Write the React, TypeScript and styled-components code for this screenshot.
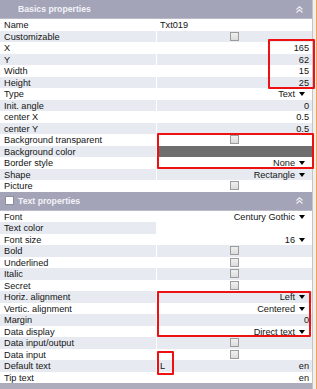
import React from "react";
import styled, { createGlobalStyle } from "styled-components";

const GlobalStyle = createGlobalStyle`
  html, body {
    margin: 0;
    padding: 0;
    background: #f4eee6;
  }
  * {
    box-sizing: border-box;
  }
`;

const Page = styled.div`
  position: relative;
  display: flex;
  width: 317px;
  height: 389px;
  overflow: hidden;
  border-right: 1px solid #f0a35a;
  font-family: "Liberation Sans", Arial, sans-serif;
  font-size: 9.2px;
  color: #141414;
`;

const Panel = styled.div`
  display: flex;
  flex-direction: column;
  width: 313px;
  height: 100%;
  background: #ffffff;
  border-right: 1px solid #c4c4ce;
`;

const SectionHeader = styled.div`
  display: flex;
  align-items: center;
  height: 19px;
  padding: 0 9px 0 5px;
  background: #a4a4b8;
  color: #f3f3f7;
  font-weight: bold;
  font-size: 8.7px;
  border-bottom: 1px solid #babac8;
`;

const HeaderSlot = styled.div`
  display: flex;
  align-items: center;
  width: 13px;
`;

const HeaderBox = styled.span`
  width: 9px;
  height: 9px;
  background: #ffffff;
  border: 1px solid #8e8e9c;
`;

const HeaderTitle = styled.span`
  flex: 1;
`;

const Row = styled.div<{ $alt: boolean }>`
  display: grid;
  grid-template-columns: 157px 1fr;
  height: 11.5px;
  line-height: 12px;
  background: ${(p) => (p.$alt ? "#e7eaf0" : "#ffffff")};
`;

const Label = styled.div`
  padding-left: 4px;
  border-right: 1px solid #ffffff;
  white-space: nowrap;
  overflow: hidden;
`;

const Value = styled.div<{ $align: "left" | "right" | "center"; $fill?: string }>`
  display: flex;
  align-items: center;
  justify-content: ${(p) =>
    p.$align === "left" ? "flex-start" : p.$align === "center" ? "center" : "flex-end"};
  padding: 0 3px;
  background: ${(p) => p.$fill ?? "transparent"};
  white-space: nowrap;
`;

const Spacer = styled.span`
  flex: 1;
`;

const Check = styled.span`
  width: 9px;
  height: 9px;
  background: linear-gradient(#f0f0f0, #dcdcdc);
  border: 1px solid #9c9c9c;
`;

const Arrow = styled.span`
  width: 0;
  height: 0;
  margin: 0 4px 0 4px;
  border-left: 3.5px solid transparent;
  border-right: 3.5px solid transparent;
  border-top: 4px solid #000000;
`;

const BottomBar = styled.div`
  flex: 1;
  background: #acacbc;
`;

const Mark = styled.div`
  position: absolute;
  border: 2px solid #ee1111;
  border-radius: 1px;
  pointer-events: none;
`;

type Cell =
  | { kind: "text"; text: string; align?: "left" | "right" }
  | { kind: "drop"; text: string }
  | { kind: "check" }
  | { kind: "fill"; color: string }
  | { kind: "split"; left: string; right: string }
  | { kind: "empty" };

type Prop = [string, Cell];

const basics: Prop[] = [
  ["Name", { kind: "text", text: "Txt019", align: "left" }],
  ["Customizable", { kind: "check" }],
  ["X", { kind: "text", text: "165" }],
  ["Y", { kind: "text", text: "62" }],
  ["Width", { kind: "text", text: "15" }],
  ["Height", { kind: "text", text: "25" }],
  ["Type", { kind: "drop", text: "Text" }],
  ["Init. angle", { kind: "text", text: "0" }],
  ["center X", { kind: "text", text: "0.5" }],
  ["center Y", { kind: "text", text: "0.5" }],
  ["Background transparent", { kind: "check" }],
  ["Background color", { kind: "fill", color: "#6e6e6e" }],
  ["Border style", { kind: "drop", text: "None" }],
  ["Shape", { kind: "drop", text: "Rectangle" }],
  ["Picture", { kind: "check" }],
];

const textProps: Prop[] = [
  ["Font", { kind: "drop", text: "Century Gothic" }],
  ["Text color", { kind: "fill", color: "#ffffff" }],
  ["Font size", { kind: "drop", text: "16" }],
  ["Bold", { kind: "check" }],
  ["Underlined", { kind: "check" }],
  ["Italic", { kind: "check" }],
  ["Secret", { kind: "check" }],
  ["Horiz. alignment", { kind: "drop", text: "Left" }],
  ["Vertic. alignment", { kind: "drop", text: "Centered" }],
  ["Margin", { kind: "text", text: "0" }],
  ["Data display", { kind: "drop", text: "Direct text" }],
  ["Data input/output", { kind: "check" }],
  ["Data input", { kind: "check" }],
  ["Default text", { kind: "split", left: "L", right: "en" }],
  ["Tip text", { kind: "text", text: "en" }],
];

const Collapse = () => (
  <svg width="7" height="7" viewBox="0 0 7 7">
    <path d="M0.5 3.5 L3.5 0.8 L6.5 3.5 M0.5 6.5 L3.5 3.8 L6.5 6.5" fill="none" stroke="#eeeef4" strokeWidth="1.2" />
  </svg>
);

const renderValue = (cell: Cell) => {
  switch (cell.kind) {
    case "text":
      return <Value $align={cell.align ?? "right"}>{cell.text}</Value>;
    case "drop":
      return (
        <Value $align="right">
          {cell.text}
          <Arrow />
        </Value>
      );
    case "check":
      return (
        <Value $align="center">
          <Check />
        </Value>
      );
    case "fill":
      return <Value $align="right" $fill={cell.color} />;
    case "split":
      return (
        <Value $align="left">
          {cell.left}
          <Spacer />
          {cell.right}
        </Value>
      );
    default:
      return <Value $align="right" />;
  }
};

const Section = ({ title, withBox, props }: { title: string; withBox?: boolean; props: Prop[] }) => (
  <>
    <SectionHeader>
      <HeaderSlot>{withBox && <HeaderBox />}</HeaderSlot>
      <HeaderTitle>{title}</HeaderTitle>
      <Collapse />
    </SectionHeader>
    {props.map(([label, cell], i) => (
      <Row key={label} $alt={i % 2 === 1}>
        <Label>{label}</Label>
        {renderValue(cell)}
      </Row>
    ))}
  </>
);

// red annotation frames drawn over the grid
const marks = [
  { left: 268, top: 39, width: 47, height: 50 },
  { left: 157, top: 133, width: 157, height: 36 },
  { left: 157, top: 291, width: 154, height: 46 },
  { left: 157, top: 351, width: 17, height: 24 },
];

export default function App() {
  return (
    <>
      <GlobalStyle />
      <Page>
        <Panel>
          <Section title="Basics properties" props={basics} />
          <Section title="Text properties" withBox props={textProps} />
          <BottomBar />
        </Panel>
        {marks.map((m, i) => (
          <Mark key={i} style={m} />
        ))}
      </Page>
    </>
  );
}
